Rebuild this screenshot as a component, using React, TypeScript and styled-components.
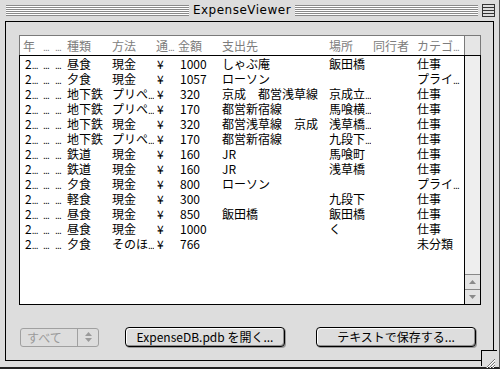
import React from "react";
import styled, { createGlobalStyle } from "styled-components";

const GlobalStyle = createGlobalStyle`
  body {
    margin: 0;
    background: #dddddd;
    font-family: "Noto Sans CJK JP", "Liberation Sans", sans-serif;
  }
`;

const COLS = "19px 12px 12px 45px 44px 22px 44px 107px 44px 44px 49px";

const Window = styled.div`
  position: relative;
  width: 500px;
  height: 369px;
  box-sizing: border-box;
  background: #dddddd;
  border-right: 1px solid #555;
  border-bottom: 2px solid #222;
  display: flex;
  flex-direction: column;
`;

const TitleBar = styled.div`
  height: 21px;
  display: flex;
  align-items: center;
  padding: 0 4px 1px 6px;
  box-sizing: border-box;
  gap: 3px;
`;

const Stripes = styled.div`
  flex: 1;
  height: 11px;
  background: repeating-linear-gradient(to bottom, #8a8a8a 0 1px, #ffffff 1px 2px);
`;

const Title = styled.div`
  font-family: "DejaVu Sans", sans-serif;
  font-size: 12px;
  letter-spacing: 0.5px;
  color: #000;
  padding: 0 1px;
`;

const ShadeBox = styled.div`
  width: 11px;
  height: 11px;
  margin-left: 1px;
  border: 1px solid #333;
  background: repeating-linear-gradient(to bottom, #ddd 0 2px, #333 2px 3px);
`;

const Frame = styled.div`
  flex: 1;
  display: flex;
  padding: 0 5px 6px 5px;
`;

const Panel = styled.div`
  flex: 1;
  border: 1px solid #000;
  background: #dddddd;
  padding: 13px 12px 13px 13px;
  display: flex;
  flex-direction: column;
`;

const HeaderBar = styled.div`
  height: 20px;
  box-sizing: border-box;
  border: 1px solid #7a7a7a;
  border-bottom: none;
  background: #fff;
  display: flex;
`;

const Grid = styled.div`
  display: grid;
  grid-template-columns: ${COLS};
  padding-left: 2px;
`;

const HeaderCell = styled.div<{ $indent?: number }>`
  font-size: 12px;
  line-height: 19px;
  color: #7d7d7d;
  padding-left: ${(p) => p.$indent ?? 2}px;
  white-space: nowrap;
  overflow: hidden;
`;

const HeaderScroll = styled.div`
  width: 15px;
  margin-left: auto;
  border-left: 1px solid #7a7a7a;
  background: #e6e6e6;
`;

const Body = styled.div`
  height: 250px;
  box-sizing: border-box;
  border: 1px solid #000;
  background: #fff;
  display: flex;
`;

const Rows = styled.div`
  flex: 1;
`;

const Cell = styled.div<{ $indent?: number }>`
  font-size: 12px;
  line-height: 15px;
  height: 15px;
  color: #000;
  padding-left: ${(p) => p.$indent ?? 2}px;
  white-space: nowrap;
  overflow: hidden;
`;

const Dots = styled.span`
  font-family: "Liberation Sans", sans-serif;
  font-size: 10px;
  letter-spacing: -0.8px;
  padding-right: 1px;
`;

const ScrollBar = styled.div`
  width: 15px;
  border-left: 1px solid #000;
  background: #eeeeee;
  display: flex;
  flex-direction: column;
  justify-content: flex-end;
`;

const ArrowBox = styled.div`
  height: 14px;
  border-top: 1px solid #888;
  background: #e4e4e4;
  display: flex;
  align-items: center;
  justify-content: center;
`;

const Controls = styled.div`
  margin-top: 22px;
  height: 20px;
  display: flex;
  align-items: center;
  padding-left: 1px;
`;

const Popup = styled.div`
  width: 79px;
  height: 19px;
  box-sizing: border-box;
  border: 1px solid #a0a0a0;
  border-radius: 3px;
  display: flex;
  align-items: stretch;
`;

const PopupLabel = styled.div`
  flex: 1;
  font-size: 12px;
  line-height: 17px;
  color: #9a9a9a;
  padding-left: 6px;
  border-right: 1px solid #a0a0a0;
`;

const PopupArrows = styled.div`
  width: 20px;
  display: flex;
  align-items: center;
  justify-content: center;
`;

const PushButton = styled.button<{ $gap: number }>`
  margin-left: ${(p) => p.$gap}px;
  width: 160px;
  height: 20px;
  padding: 0;
  box-sizing: border-box;
  border: 1px solid #000;
  border-radius: 4px;
  background: #dddddd;
  box-shadow: inset 1px 1px 0 #ffffff, inset -1px -1px 0 #8e8e8e, 1px 1px 0 #9a9a9a;
  font-family: "Noto Sans CJK JP", "Liberation Sans", sans-serif;
  font-size: 12px;
  line-height: 18px;
  color: #000;
  text-align: center;
`;

const GrowBox = styled.div`
  position: absolute;
  right: 2px;
  bottom: 1px;
  width: 15px;
  height: 15px;
  border-top: 1px solid #000;
  border-left: 1px solid #000;
  background: #dddddd;
`;

// a trailing "…" marks text that the list view cut short
const Text = ({ s }: { s: string }) =>
  s.endsWith("…") ? (
    <>
      {s.slice(0, -1)}
      <Dots>...</Dots>
    </>
  ) : (
    <>{s}</>
  );

const headers = ["年", "…", "…", "種類", "方法", "通…", "金額", "支出先", "場所", "同行者", "カテゴ…"];

const rows: string[][] = [
  ["昼食", "現金", "1000", "しゃぶ庵", "飯田橋", "", "仕事"],
  ["夕食", "現金", "1057", "ローソン", "", "", "プライ…"],
  ["地下鉄", "プリペ…", "320", "京成　都営浅草線", "京成立…", "", "仕事"],
  ["地下鉄", "プリペ…", "170", "都営新宿線", "馬喰横…", "", "仕事"],
  ["地下鉄", "現金", "320", "都営浅草線　京成", "浅草橋…", "", "仕事"],
  ["地下鉄", "プリペ…", "170", "都営新宿線", "九段下…", "", "仕事"],
  ["鉄道", "現金", "160", "JR", "馬喰町", "", "仕事"],
  ["鉄道", "現金", "160", "JR", "浅草橋", "", "仕事"],
  ["夕食", "現金", "800", "ローソン", "", "", "プライ…"],
  ["軽食", "現金", "300", "", "九段下", "", "仕事"],
  ["昼食", "現金", "850", "飯田橋", "飯田橋", "", "仕事"],
  ["昼食", "現金", "1000", "", "く", "", "仕事"],
  ["夕食", "そのほ…", "766", "", "", "", "未分類"],
];

const Tri = ({ up }: { up?: boolean }) => (
  <svg width="7" height="4" viewBox="0 0 7 4">
    <polygon points={up ? "0,4 7,4 3.5,0" : "0,0 7,0 3.5,4"} fill="#8a8a8a" />
  </svg>
);

const App = () => {
  return (
    <>
      <GlobalStyle />
      <Window>
        <TitleBar>
          <Stripes />
          <Title>ExpenseViewer</Title>
          <Stripes />
          <ShadeBox />
        </TitleBar>
        <Frame>
          <Panel>
            <HeaderBar>
              <Grid>
                {headers.map((h, i) => (
                  <HeaderCell key={i} $indent={i === 0 ? 1 : 2}>
                    <Text s={h} />
                  </HeaderCell>
                ))}
              </Grid>
              <HeaderScroll />
            </HeaderBar>
            <Body>
              <Rows>
                {rows.map((r, i) => (
                  <Grid key={i}>
                    <Cell $indent={3}><Text s="2…" /></Cell>
                    <Cell><Text s="…" /></Cell>
                    <Cell><Text s="…" /></Cell>
                    <Cell>{r[0]}</Cell>
                    <Cell><Text s={r[1]} /></Cell>
                    <Cell $indent={3}>¥</Cell>
                    <Cell $indent={4}>{r[2]}</Cell>
                    <Cell>{r[3]}</Cell>
                    <Cell><Text s={r[4]} /></Cell>
                    <Cell>{r[5]}</Cell>
                    <Cell><Text s={r[6]} /></Cell>
                  </Grid>
                ))}
              </Rows>
              <ScrollBar>
                <ArrowBox><Tri up /></ArrowBox>
                <ArrowBox><Tri /></ArrowBox>
              </ScrollBar>
            </Body>
            <Controls>
              <Popup>
                <PopupLabel>すべて</PopupLabel>
                <PopupArrows>
                  <svg width="7" height="10" viewBox="0 0 7 10">
                    <polygon points="0,4 7,4 3.5,0" fill="#9a9a9a" />
                    <polygon points="0,6 7,6 3.5,10" fill="#9a9a9a" />
                  </svg>
                </PopupArrows>
              </Popup>
              <PushButton $gap={26}>ExpenseDB.pdb を開く...</PushButton>
              <PushButton $gap={31}>テキストで保存する...</PushButton>
            </Controls>
          </Panel>
        </Frame>
        <GrowBox>
          <svg width="15" height="15" viewBox="0 0 15 15">
            <path d="M4 13 L13 4 M7 13 L13 7 M10 13 L13 10" stroke="#777" strokeWidth="1" />
            <path d="M5 13 L13 5 M8 13 L13 8 M11 13 L13 11" stroke="#fff" strokeWidth="1" />
          </svg>
        </GrowBox>
      </Window>
    </>
  );
};

export default App;
